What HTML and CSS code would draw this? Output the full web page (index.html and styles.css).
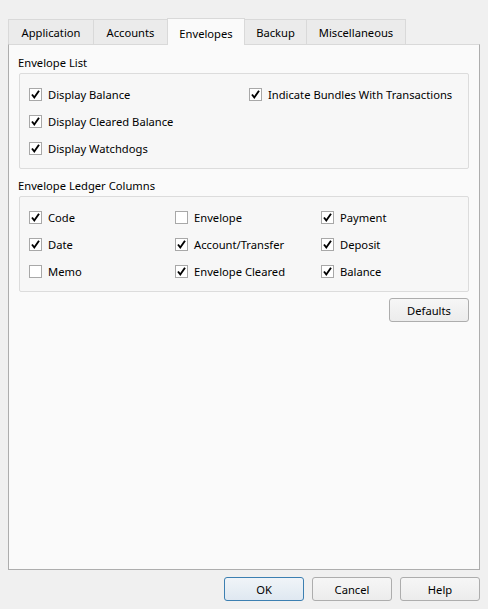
FILE: index.html
```html
<!DOCTYPE html>
<html lang="en">
<head>
    <meta charset="UTF-8">
    <title>Preferences</title>
    <link rel="stylesheet" href="styles.css">
</head>
<body>
    <div class="dialog">
        <div class="tabs">
            <div class="tab tab-app">Application</div>
            <div class="tab tab-acc">Accounts</div>
            <div class="tab tab-env active">Envelopes</div>
            <div class="tab tab-bak">Backup</div>
            <div class="tab tab-misc">Miscellaneous</div>
        </div>
        <div class="panel">
            <div class="group-title">Envelope List</div>
            <div class="group list-grid">
                <label class="check"><span class="box on"></span>Display Balance</label>
                <label class="check"><span class="box on"></span>Indicate Bundles With Transactions</label>
                <label class="check"><span class="box on"></span>Display Cleared Balance</label>
                <span></span>
                <label class="check"><span class="box on"></span>Display Watchdogs</label>
                <span></span>
            </div>

            <div class="group-title second">Envelope Ledger Columns</div>
            <div class="group ledger-grid">
                <label class="check"><span class="box on"></span>Code</label>
                <label class="check"><span class="box"></span>Envelope</label>
                <label class="check"><span class="box on"></span>Payment</label>
                <label class="check"><span class="box on"></span>Date</label>
                <label class="check"><span class="box on"></span>Account/Transfer</label>
                <label class="check"><span class="box on"></span>Deposit</label>
                <label class="check"><span class="box"></span>Memo</label>
                <label class="check"><span class="box on"></span>Envelope Cleared</label>
                <label class="check"><span class="box on"></span>Balance</label>
            </div>
            <div class="defaults-row">
                <button class="btn">Defaults</button>
            </div>
        </div>
        <div class="footer">
            <button class="btn primary">OK</button>
            <button class="btn">Cancel</button>
            <button class="btn">Help</button>
        </div>
    </div>
</body>
</html>
```

FILE: styles.css
```css
*{
    margin: 0;
    padding: 0;
    box-sizing: border-box;
}
body{
    background-color: #f0f0f0;
    font-family: "Noto Sans", "Open Sans", sans-serif;
    font-size: 11.2px;
    color: #000;
}
.dialog{
    height: 609px;
    display: flex;
    flex-direction: column;
    padding: 18px 8px 8px 8px;
}
.tabs{
    display: flex;
    align-items: flex-end;
    height: 27px;
    margin-bottom: -1px;
    position: relative;
    z-index: 1;
}
.tab{
    height: 25px;
    line-height: 16px;
    padding-top: 5px;
    text-align: center;
    background-color: #ebebeb;
    border: 1px solid #d9d9d9;
    border-bottom: none;
    margin-left: -1px;
    margin-bottom: 1px;
}
.tab:first-child{
    margin-left: 0;
}
.tab-app{ width: 86px; }
.tab-acc{ width: 75px; }
.tab-env{ width: 78px; }
.tab-bak{ width: 63px; }
.tab-misc{ width: 100px; }
.tab.active{
    height: 27px;
    padding-top: 7px;
    margin-bottom: 0;
    background-color: #fafafa;
    position: relative;
    z-index: 2;
}
.panel{
    flex: 1;
    background-color: #fafafa;
    border: 1px solid #adadad;
    border-top-color: #d9d9d9;
    padding: 10px 10px 0 9px;
}
.group-title{
    line-height: 16px;
    margin-bottom: 2px;
}
.group-title.second{
    margin-top: 9px;
}
.group{
    margin-left: 1px;
    border: 1px solid #dcdcdc;
    border-radius: 2px;
    background-color: #f7f7f7;
    padding: 7px 9px 6px 9px;
    display: grid;
    grid-auto-rows: 27px;
}
.list-grid{
    grid-template-columns: 220px 1fr;
}
.ledger-grid{
    grid-template-columns: 146px 146px 1fr;
}
.check{
    display: flex;
    align-items: center;
    white-space: nowrap;
}
.box{
    width: 13px;
    height: 13px;
    border: 1px solid #a8a8a8;
    background-color: #fff;
    margin-right: 6px;
    flex-shrink: 0;
}
.box.on{
    background: #fff url("data:image/svg+xml;utf8,<svg xmlns='http://www.w3.org/2000/svg' width='11' height='11' viewBox='0 0 11 11'><path d='M2 5.5 L4.3 8.5 L9 1.8' fill='none' stroke='black' stroke-width='1.9'/></svg>") no-repeat center;
}
.defaults-row{
    display: flex;
    justify-content: flex-end;
    margin-top: 6px;
}
.btn{
    width: 80px;
    height: 24px;
    font-family: inherit;
    font-size: 11.2px;
    color: #000;
    border: 1px solid #adadad;
    border-radius: 3px;
    background: linear-gradient(#f6f6f6, #ececec);
}
.btn.primary{
    border-color: #3c7fb1;
    background: linear-gradient(#f0f4f8, #dfe8f1);
}
.footer{
    display: flex;
    justify-content: flex-end;
    gap: 8px;
    margin-top: 7px;
}
```
